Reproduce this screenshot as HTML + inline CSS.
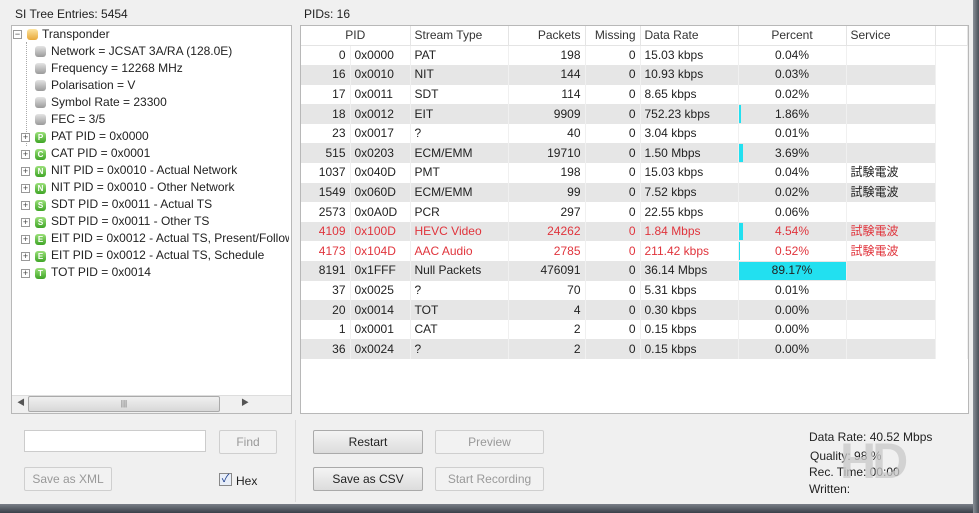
<!DOCTYPE html>
<html><head><meta charset="utf-8">
<style>
*{margin:0;padding:0;box-sizing:border-box}
body{width:979px;height:513px;overflow:hidden;background:#f0f0f0;font-family:"Liberation Sans","Noto Sans CJK JP",sans-serif;font-size:12px;color:#222;position:relative}
.a{position:absolute;white-space:nowrap}
.panel{position:absolute;background:#fff;border:1px solid #b8b8b8}
table{border-collapse:collapse;table-layout:fixed;position:absolute;left:301px;top:26px}
td{height:19.6px;padding:0 4px;white-space:nowrap;overflow:hidden;border-right:1px solid #f0f0f0;font-size:12px;line-height:19px}
tr.h td{height:18px;border-right:1px solid #e4e4e4;border-bottom:1px solid #e4e4e4;color:#333}
tr.s td{background:#e6e6e6}
tr.s td.n{background:#fff}
.r{text-align:right}.c{text-align:center}
.red td{color:#e0343c}
.pc{position:relative}
.bar{position:absolute;left:0;top:1px;bottom:1px;background:#22e0f0}
.pc span{position:relative}
.btn{position:absolute;border:1px solid #aaa;border-radius:2px;background:linear-gradient(#f4f4f4,#dcdcdc);text-align:center;line-height:22px;height:24px;font-size:12px}
.dis{background:#f2f2f2;border-color:#cfcfcf;color:#999}
.ico{position:absolute;width:11px;height:11px;border-radius:3px;background:linear-gradient(#9be07a,#3fa526);color:#fff;font-size:8px;font-weight:bold;text-align:center;line-height:11px}
.g{background:linear-gradient(#e4e4e4,#9a9a9a)}
.pl{position:absolute;width:9px;height:9px;border:1px solid #999;background:#fff;font-size:9px;line-height:7px;text-align:center;color:#444}
</style></head><body>
<div class="a" style="left:15px;top:7px">SI Tree Entries: 5454</div>
<div class="a" style="left:304px;top:7px">PIDs: 16</div>

<div class="panel" style="left:11px;top:25px;width:281px;height:389px"></div>
<div class="pl" style="left:13px;top:30px">−</div>
<div class="a" style="left:27px;top:29px;width:11px;height:11px;border-radius:3px;background:linear-gradient(#fde4a0,#e8a838)"></div>
<div class="a" style="left:42px;top:27px">Transponder</div>
<div class="a" style="left:26px;top:42px;height:104px;border-left:1px dotted #aaa"></div>
<div class="ico g" style="left:35px;top:46px"></div><div class="a" style="left:51px;top:44px">Network = JCSAT 3A/RA (128.0E)</div>
<div class="ico g" style="left:35px;top:63px"></div><div class="a" style="left:51px;top:61px">Frequency = 12268 MHz</div>
<div class="ico g" style="left:35px;top:80px"></div><div class="a" style="left:51px;top:78px">Polarisation = V</div>
<div class="ico g" style="left:35px;top:97px"></div><div class="a" style="left:51px;top:95px">Symbol Rate = 23300</div>
<div class="ico g" style="left:35px;top:114px"></div><div class="a" style="left:51px;top:112px">FEC = 3/5</div>

<div class="pl" style="left:21px;top:133px">+</div><div class="ico" style="left:35px;top:132px">P</div><div class="a" style="left:51px;top:129px">PAT PID = 0x0000</div>
<div class="pl" style="left:21px;top:150px">+</div><div class="ico" style="left:35px;top:149px">C</div><div class="a" style="left:51px;top:146px">CAT PID = 0x0001</div>
<div class="pl" style="left:21px;top:167px">+</div><div class="ico" style="left:35px;top:166px">N</div><div class="a" style="left:51px;top:163px">NIT PID = 0x0010 - Actual Network</div>
<div class="pl" style="left:21px;top:184px">+</div><div class="ico" style="left:35px;top:183px">N</div><div class="a" style="left:51px;top:180px">NIT PID = 0x0010 - Other Network</div>
<div class="pl" style="left:21px;top:201px">+</div><div class="ico" style="left:35px;top:200px">S</div><div class="a" style="left:51px;top:197px">SDT PID = 0x0011 - Actual TS</div>
<div class="pl" style="left:21px;top:218px">+</div><div class="ico" style="left:35px;top:217px">S</div><div class="a" style="left:51px;top:214px">SDT PID = 0x0011 - Other TS</div>
<div class="pl" style="left:21px;top:235px">+</div><div class="ico" style="left:35px;top:234px">E</div><div class="a" style="left:51px;top:231px;width:238px;overflow:hidden">EIT PID = 0x0012 - Actual TS, Present/Follow</div>
<div class="pl" style="left:21px;top:252px">+</div><div class="ico" style="left:35px;top:251px">E</div><div class="a" style="left:51px;top:248px">EIT PID = 0x0012 - Actual TS, Schedule</div>
<div class="pl" style="left:21px;top:269px">+</div><div class="ico" style="left:35px;top:268px">T</div><div class="a" style="left:51px;top:265px">TOT PID = 0x0014</div>

<div class="a" style="left:12px;top:395px;width:279px;height:18px;background:#f0f0f0;border-top:1px solid #ddd"></div>
<div class="a" style="left:17px;top:397px;font-size:8px;color:#555">◀</div>
<div class="a" style="left:28px;top:396px;width:192px;height:16px;border:1px solid #aaa;border-radius:2px;background:linear-gradient(#f0f0f0,#d8d8d8);text-align:center;font-size:8px;line-height:14px;color:#666">|||</div>
<div class="a" style="left:241px;top:397px;font-size:8px;color:#555">▶</div>

<div class="panel" style="left:300px;top:25px;width:669px;height:389px"></div>
<table>
<colgroup><col style="width:49px"><col style="width:60px"><col style="width:98px"><col style="width:77px"><col style="width:55px"><col style="width:98px"><col style="width:108px"><col style="width:89px"><col style="width:32px"></colgroup>
<tr class="h"><td class="c" colspan="2">PID</td><td>Stream Type</td><td class="r">Packets</td><td class="r">Missing</td><td>Data Rate</td><td class="c">Percent</td><td>Service</td><td></td></tr>
<tr><td class="r">0</td><td>0x0000</td><td>PAT</td><td class="r">198</td><td class="r">0</td><td>15.03 kbps</td><td class="c">0.04%</td><td></td><td></td></tr>
<tr class="s"><td class="r">16</td><td>0x0010</td><td>NIT</td><td class="r">144</td><td class="r">0</td><td>10.93 kbps</td><td class="c">0.03%</td><td></td><td class="n"></td></tr>
<tr><td class="r">17</td><td>0x0011</td><td>SDT</td><td class="r">114</td><td class="r">0</td><td>8.65 kbps</td><td class="c">0.02%</td><td></td><td></td></tr>
<tr class="s"><td class="r">18</td><td>0x0012</td><td>EIT</td><td class="r">9909</td><td class="r">0</td><td>752.23 kbps</td><td class="c pc"><div class="bar" style="width:2px"></div><span>1.86%</span></td><td></td><td class="n"></td></tr>
<tr><td class="r">23</td><td>0x0017</td><td>?</td><td class="r">40</td><td class="r">0</td><td>3.04 kbps</td><td class="c">0.01%</td><td></td><td></td></tr>
<tr class="s"><td class="r">515</td><td>0x0203</td><td>ECM/EMM</td><td class="r">19710</td><td class="r">0</td><td>1.50 Mbps</td><td class="c pc"><div class="bar" style="width:4px"></div><span>3.69%</span></td><td></td><td class="n"></td></tr>
<tr><td class="r">1037</td><td>0x040D</td><td>PMT</td><td class="r">198</td><td class="r">0</td><td>15.03 kbps</td><td class="c">0.04%</td><td>試験電波</td><td></td></tr>
<tr class="s"><td class="r">1549</td><td>0x060D</td><td>ECM/EMM</td><td class="r">99</td><td class="r">0</td><td>7.52 kbps</td><td class="c">0.02%</td><td>試験電波</td><td class="n"></td></tr>
<tr><td class="r">2573</td><td>0x0A0D</td><td>PCR</td><td class="r">297</td><td class="r">0</td><td>22.55 kbps</td><td class="c">0.06%</td><td></td><td></td></tr>
<tr class="s red"><td class="r">4109</td><td>0x100D</td><td>HEVC Video</td><td class="r">24262</td><td class="r">0</td><td>1.84 Mbps</td><td class="c pc"><div class="bar" style="width:4px"></div><span>4.54%</span></td><td>試験電波</td><td class="n"></td></tr>
<tr class="red"><td class="r">4173</td><td>0x104D</td><td>AAC Audio</td><td class="r">2785</td><td class="r">0</td><td>211.42 kbps</td><td class="c pc"><div class="bar" style="width:1px"></div><span>0.52%</span></td><td>試験電波</td><td></td></tr>
<tr class="s"><td class="r">8191</td><td>0x1FFF</td><td>Null Packets</td><td class="r">476091</td><td class="r">0</td><td>36.14 Mbps</td><td class="c pc"><div class="bar" style="width:108px"></div><span>89.17%</span></td><td></td><td class="n"></td></tr>
<tr><td class="r">37</td><td>0x0025</td><td>?</td><td class="r">70</td><td class="r">0</td><td>5.31 kbps</td><td class="c">0.01%</td><td></td><td></td></tr>
<tr class="s"><td class="r">20</td><td>0x0014</td><td>TOT</td><td class="r">4</td><td class="r">0</td><td>0.30 kbps</td><td class="c">0.00%</td><td></td><td class="n"></td></tr>
<tr><td class="r">1</td><td>0x0001</td><td>CAT</td><td class="r">2</td><td class="r">0</td><td>0.15 kbps</td><td class="c">0.00%</td><td></td><td></td></tr>
<tr class="s"><td class="r">36</td><td>0x0024</td><td>?</td><td class="r">2</td><td class="r">0</td><td>0.15 kbps</td><td class="c">0.00%</td><td></td><td class="n"></td></tr>
</table>

<div class="a" style="left:295px;top:420px;width:1px;height:82px;background:#dcdcdc"></div>
<div class="a" style="left:24px;top:430px;width:182px;height:22px;background:#fff;border:1px solid #ccc"></div>
<div class="btn dis" style="left:219px;top:430px;width:58px">Find</div>
<div class="btn dis" style="left:24px;top:467px;width:88px">Save as XML</div>
<div class="a" style="left:219px;top:473px;width:13px;height:13px;border:1px solid #888;background:#e8eef8;font-size:11px;line-height:11px;text-align:center;color:#1a3c8c">✓</div>
<div class="a" style="left:236px;top:474px">Hex</div>
<div class="btn" style="left:313px;top:430px;width:110px">Restart</div>
<div class="btn dis" style="left:435px;top:430px;width:109px">Preview</div>
<div class="btn" style="left:313px;top:467px;width:110px">Save as CSV</div>
<div class="btn dis" style="left:435px;top:467px;width:109px">Start Recording</div>

<div class="a" style="left:809px;top:430px">Data Rate:  40.52 Mbps</div>
<div class="a" style="left:810px;top:449px">Quality: 98 %</div>
<div class="a" style="left:809px;top:465px">Rec. Time: 00:00</div>
<div class="a" style="left:809px;top:482px">Written: </div>
<div class="a" style="left:840px;top:436px;font-size:50px;font-weight:bold;color:rgba(200,200,200,.75);letter-spacing:-4px;line-height:50px">HD</div>

<div class="a" style="left:0;top:504px;width:979px;height:9px;background:linear-gradient(#7a8088,#3a3f48)"></div>
<div class="a" style="left:973px;top:0;width:6px;height:513px;background:linear-gradient(90deg,#8a9098,#4a5058)"></div>
</body></html>
